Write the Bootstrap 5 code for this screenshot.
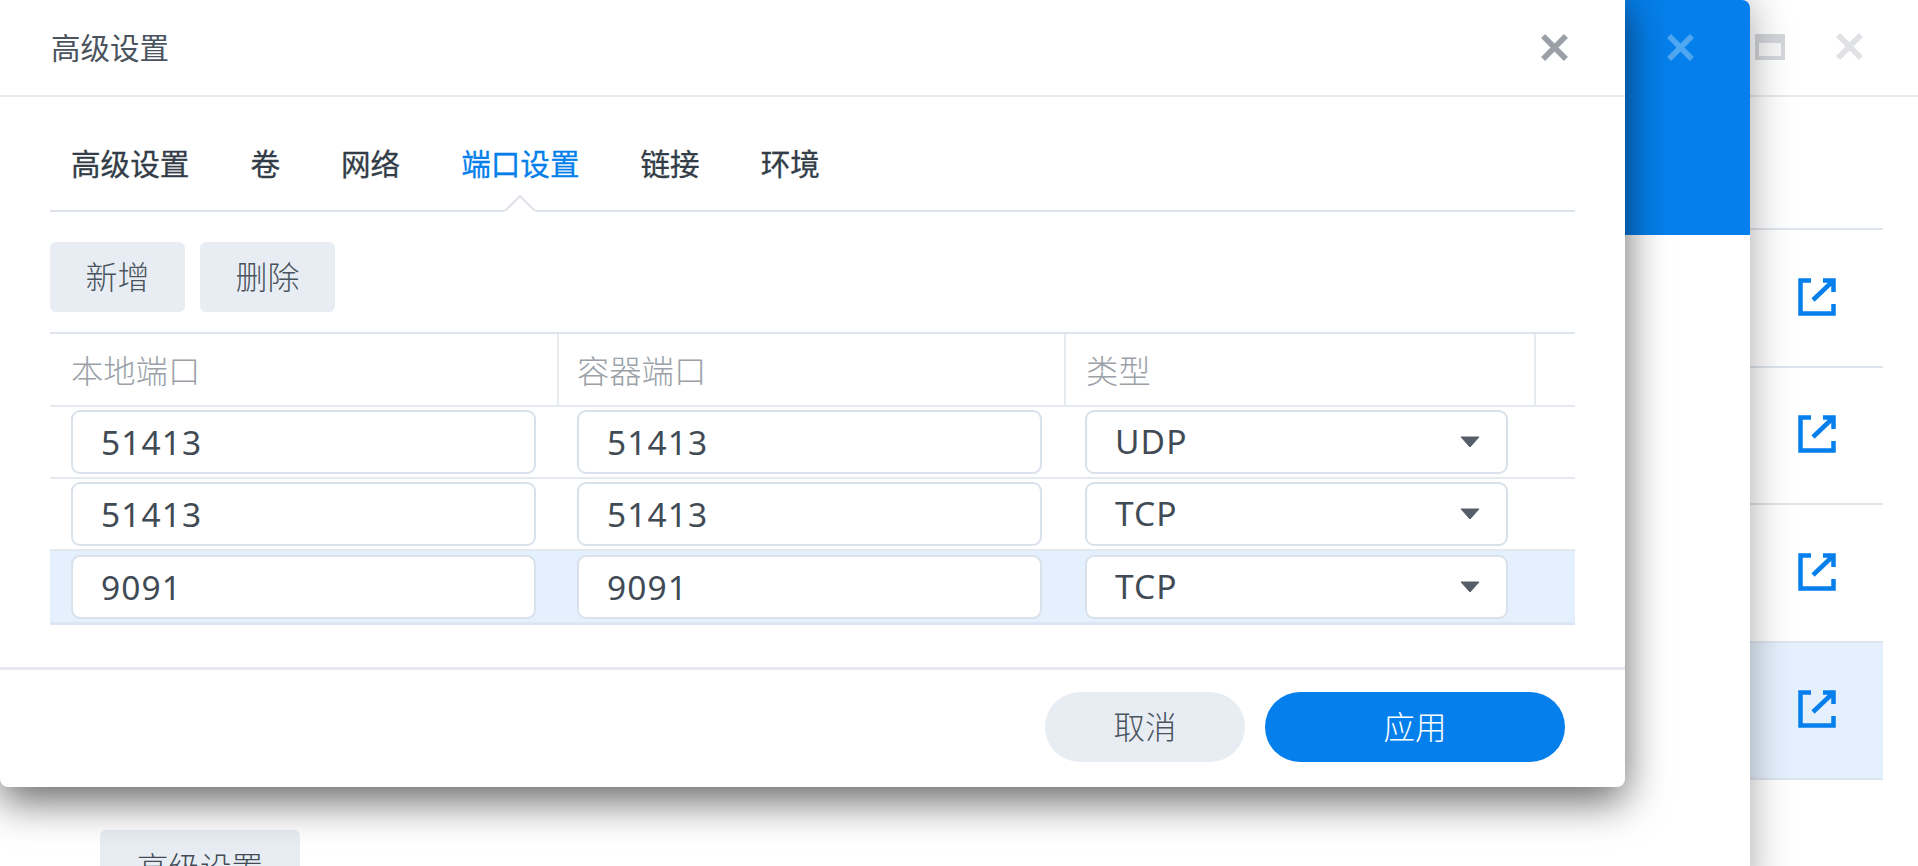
<!DOCTYPE html>
<html lang="zh">
<head>
<meta charset="utf-8">
<title>高级设置</title>
<link href="https://cdn.jsdelivr.net/npm/bootstrap@5.3.0/dist/css/bootstrap.min.css" rel="stylesheet">
<style>
html,body{height:100%;margin:0;overflow:hidden;background:#fff}
body{font-family:"Noto Sans","Noto Sans CJK SC",sans-serif;color:#414b55;-webkit-font-smoothing:antialiased}
.win-base{position:absolute;inset:0;background:#fff}
.base-top{height:97px;border-bottom:2px solid #e6eaef;display:flex;justify-content:flex-end;align-items:center;padding-right:55px;gap:51px;padding-bottom:2px}
.base-rows{position:absolute;left:1750px;top:228px;width:133px}
.base-row{height:137.500px;border-top:2px solid #dfe5ec;display:flex;align-items:center;justify-content:center;padding-bottom:2px}
.base-row.sel{background:#e4f0fd;border-bottom:2px solid #dfe5ec;height:139px}
.win-mid{position:absolute;left:0;top:0;width:1750px;height:900px;background:#fff;border-radius:8px 8px 0 0;box-shadow:0 0 40px rgba(0,0,0,.35)}
.mid-head{height:235px;background:#057feb;border-radius:0 8px 0 0;display:flex;justify-content:flex-end;padding:34px 56px 0 0}
.mid-btn{margin:595px 0 0 100px;width:200px;height:70px;background:#e8edf3;border:0;border-radius:6px;color:#414b55;font-size:31.500px;font-weight:300;padding:6px 0 0;line-height:1;display:block}
.win-dlg{position:absolute;left:0;top:-8px;width:1625px;height:795px;background:#fff;border-radius:8px;box-shadow:0 14px 42px rgba(0,0,0,.6);display:flex;flex-direction:column}
.dlg-head{height:105px;padding:8px 57px 0 51px;border-bottom:2px solid #e6eaef;display:flex;justify-content:space-between;align-items:center;flex:none}
.dlg-title{font-size:29.500px;line-height:1;color:#4a545e}
.dlg-body{flex:1;padding:0 50px}
.tabbar{height:94px;margin-top:21px;margin-bottom:0;border-bottom:2px solid #dde3ea;position:relative;padding-top:25px;padding-left:21px;gap:61px;flex-wrap:nowrap;padding-bottom:0}
.tabitem{font-size:29.600px;line-height:1.4;color:#333d47;font-weight:400;white-space:nowrap;-webkit-text-stroke:.3px #333d47}
.tabitem.on{color:#057feb;-webkit-text-stroke:.3px #057feb}
.tabcaret{position:absolute;left:454px;bottom:-2px;display:block}
.tool{margin-top:30px;gap:15px}
.tool-btn{width:135px;height:70px;background:#e8edf3;border:0;border-radius:6px;color:#4a545e;font-size:32px;font-weight:300;padding:0;line-height:1}
.tool-btn:hover{background:#e8edf3;color:#4a545e}
.port-table{table-layout:fixed;width:1525px;margin:20px 0 0;border-top:2px solid #dfe5ec;border-bottom:0;border-collapse:separate;border-spacing:0;--bs-table-bg:transparent}
.port-table th{height:73px;font-size:32.300px;font-weight:300;color:#9aa1a8;padding:2px 0 0 21px;vertical-align:middle;border-bottom:2px solid #e4e9ef;border-right:2px solid #e6ebf0;line-height:1}
.port-table th:nth-child(2){padding-left:18px}
.port-table th:nth-child(3){padding-left:20px}
.port-table th:last-child{border-right:0}
.port-table td{padding:3px 0 3px 21px;border-bottom:2px solid #e4e9ef;vertical-align:middle;height:72px}
.port-table td:nth-child(2){padding-left:18px}
.port-table td:nth-child(3){padding-left:19px}
.port-table tr.sel td{background:#e4f0fd;border-bottom:3px solid #dbe6f2;height:74px}
.port-in,.port-sel{height:64px;border:2px solid #d9e1ea;border-radius:9px;font-size:33.500px;color:#414b55;padding:0 0 0 28px;line-height:1;letter-spacing:1.100px;font-family:"Noto Sans",sans-serif;box-shadow:none;background-color:#fff}
.port-in{width:465px}
.port-sel{width:423px;background-image:url("data:image/svg+xml,%3Csvg xmlns='http://www.w3.org/2000/svg' viewBox='0 0 20 12'%3E%3Cpath d='M1 1h18l-9 10z' fill='%23555e68' stroke='%23555e68' stroke-linejoin='round'/%3E%3C/svg%3E");background-size:20px 12px;background-position:right 26px center}
.dlg-foot{height:120px;flex:none;border-top:3px solid #e6eaef;padding:22px 60px 0 0;display:flex;justify-content:flex-end;gap:20px;align-items:flex-start}
.foot-cancel,.foot-apply{height:70px;border:0;border-radius:35px;font-size:31.500px;font-weight:300;padding:0;line-height:1}
.foot-cancel{width:200px;background:#e8edf3;color:#4a545e}
.foot-apply{width:300px;background:#057feb;color:#fff}
.foot-cancel:hover{background:#e8edf3;color:#4a545e}
.foot-apply:hover{background:#057feb;color:#fff}
</style>
</head>
<body>
<div class="win-base">
  <div class="base-top">
    <svg width="30" height="26" viewBox="0 0 30 26"><path d="M0 0h30v26H0z" fill="#d3d6da"/><path d="M4 9h22v13H4z" fill="#f7f7f8"/></svg>
    <svg width="27" height="27" viewBox="0 0 26 26"><path d="M2 2l22 22M24 2L2 24" stroke="#dfe1e4" stroke-width="5.500"/></svg>
  </div>
  <div class="base-rows">
    <div class="base-row"><svg width="38" height="38" viewBox="0 0 38 38" fill="none" stroke="#057feb" stroke-width="4.500"><path d="M13 2.500H2.500v33h33V26M25 2.500h10.500V14M35 3L15 22"/></svg></div>
    <div class="base-row"><svg width="38" height="38" viewBox="0 0 38 38" fill="none" stroke="#057feb" stroke-width="4.500"><path d="M13 2.500H2.500v33h33V26M25 2.500h10.500V14M35 3L15 22"/></svg></div>
    <div class="base-row"><svg width="38" height="38" viewBox="0 0 38 38" fill="none" stroke="#057feb" stroke-width="4.500"><path d="M13 2.500H2.500v33h33V26M25 2.500h10.500V14M35 3L15 22"/></svg></div>
    <div class="base-row sel"><svg width="38" height="38" viewBox="0 0 38 38" fill="none" stroke="#057feb" stroke-width="4.500"><path d="M13 2.500H2.500v33h33V26M25 2.500h10.500V14M35 3L15 22"/></svg></div>
  </div>
</div>

<div class="win-mid">
  <div class="mid-head"><svg width="27" height="27" viewBox="0 0 26 26"><path d="M2 2l22 22M24 2L2 24" stroke="#4fa6f1" stroke-width="5.500"/></svg></div>
  <button type="button" class="btn mid-btn">高级设置</button>
</div>

<div class="win-dlg">
  <div class="dlg-head">
    <span class="dlg-title">高级设置</span>
    <svg width="27" height="27" viewBox="0 0 26 26"><path d="M2 2l22 22M24 2L2 24" stroke="#9aa0a5" stroke-width="5.500"/></svg>
  </div>
  <div class="dlg-body">
    <ul class="nav tabbar list-unstyled">
      <li class="tabitem">高级设置</li>
      <li class="tabitem">卷</li>
      <li class="tabitem">网络</li>
      <li class="tabitem on">端口设置</li>
      <li class="tabitem">链接</li>
      <li class="tabitem">环境</li>
      <li><svg class="tabcaret" width="32" height="17" viewBox="0 0 32 17"><path d="M0 17L16 1l16 16z" fill="#fff"/><path d="M1 16L16 1l15 15" fill="none" stroke="#dde3ea" stroke-width="2"/></svg></li>
    </ul>
    <div class="d-flex tool">
      <button type="button" class="btn tool-btn">新增</button>
      <button type="button" class="btn tool-btn">删除</button>
    </div>
    <table class="table port-table">
      <colgroup><col style="width:509px"><col style="width:507px"><col style="width:470px"><col style="width:39px"></colgroup>
      <thead><tr><th>本地端口</th><th>容器端口</th><th>类型</th><th></th></tr></thead>
      <tbody>
        <tr><td><input class="form-control port-in" value="51413"></td><td><input class="form-control port-in" value="51413"></td><td><select class="form-select port-sel"><option>UDP</option></select></td><td></td></tr>
        <tr><td><input class="form-control port-in" value="51413"></td><td><input class="form-control port-in" value="51413"></td><td><select class="form-select port-sel"><option>TCP</option></select></td><td></td></tr>
        <tr class="sel"><td><input class="form-control port-in" value="9091"></td><td><input class="form-control port-in" value="9091"></td><td><select class="form-select port-sel"><option>TCP</option></select></td><td></td></tr>
      </tbody>
    </table>
  </div>
  <div class="dlg-foot">
    <button type="button" class="btn foot-cancel">取消</button>
    <button type="button" class="btn foot-apply">应用</button>
  </div>
</div>
<script src="https://cdn.jsdelivr.net/npm/bootstrap@5.3.0/dist/js/bootstrap.bundle.min.js"></script>
</body>
</html>
